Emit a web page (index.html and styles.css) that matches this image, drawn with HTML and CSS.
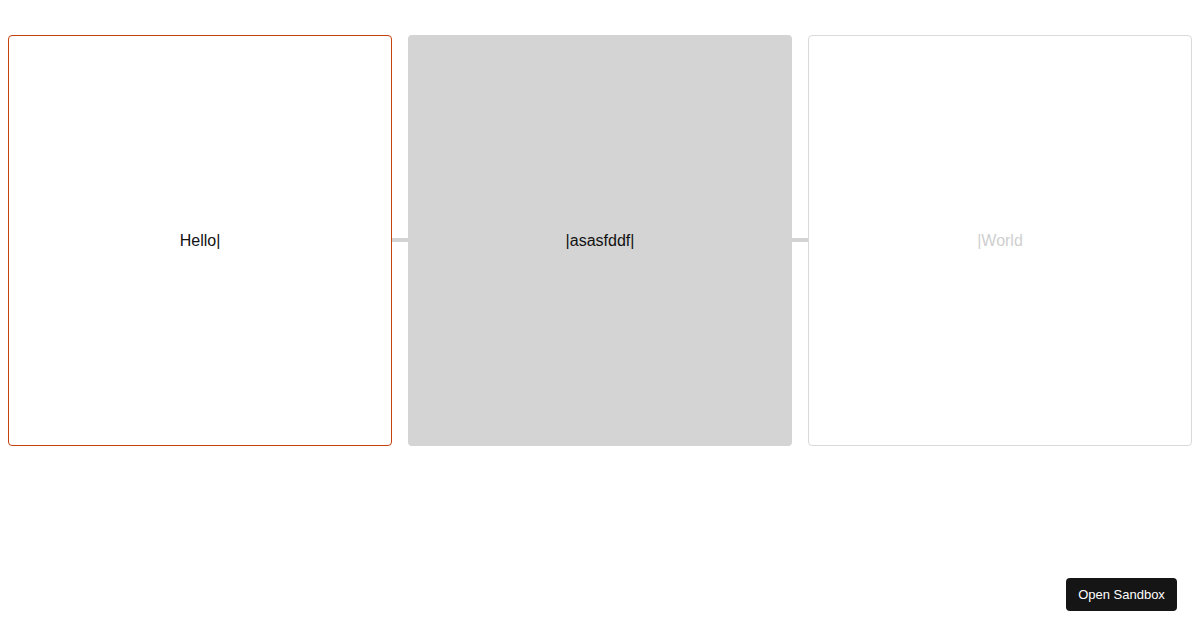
FILE: index.html
```html
<!DOCTYPE html>
<html>
<head>
<meta charset="utf-8">
<link rel="stylesheet" href="styles.css">
</head>
<body>
<div class="flow">
  <div class="node node-active"><span class="label">Hello|</span></div>
  <div class="link"></div>
  <div class="node node-filled"><span class="label">|asasfddf|</span></div>
  <div class="link"></div>
  <div class="node node-muted"><span class="label label-muted">|World</span></div>
</div>
<button class="sandbox-btn">Open Sandbox</button>
</body>
</html>
```
FILE: styles.css
```css
html, body {
  margin: 0;
  padding: 0;
  background: #ffffff;
  font-family: "Liberation Sans", Arial, sans-serif;
}

.flow {
  display: flex;
  align-items: center;
  padding: 35px 8px 0 8px;
}

.node {
  box-sizing: border-box;
  width: 384px;
  height: 411px;
  border-radius: 4px;
  display: flex;
  align-items: center;
  justify-content: center;
  flex: none;
}

.node-active {
  border: 1px solid #c2410c;
  background: #ffffff;
}

.node-filled {
  background: #d4d4d4;
}

.node-muted {
  border: 1px solid #d9d9d9;
  background: #ffffff;
}

.label {
  font-size: 16px;
  color: #111111;
  line-height: 20px;
}

.label-muted {
  color: #cfcfcf;
}

.link {
  width: 16px;
  height: 4px;
  background: #d4d4d4;
  flex: none;
  margin-top: -1px;
}

.sandbox-btn {
  position: fixed;
  right: 23px;
  bottom: 19px;
  width: 111px;
  height: 33px;
  background: #151515;
  color: #ffffff;
  border: none;
  border-radius: 4px;
  font-family: "Liberation Sans", Arial, sans-serif;
  font-size: 13px;
  padding: 0;
}
```
